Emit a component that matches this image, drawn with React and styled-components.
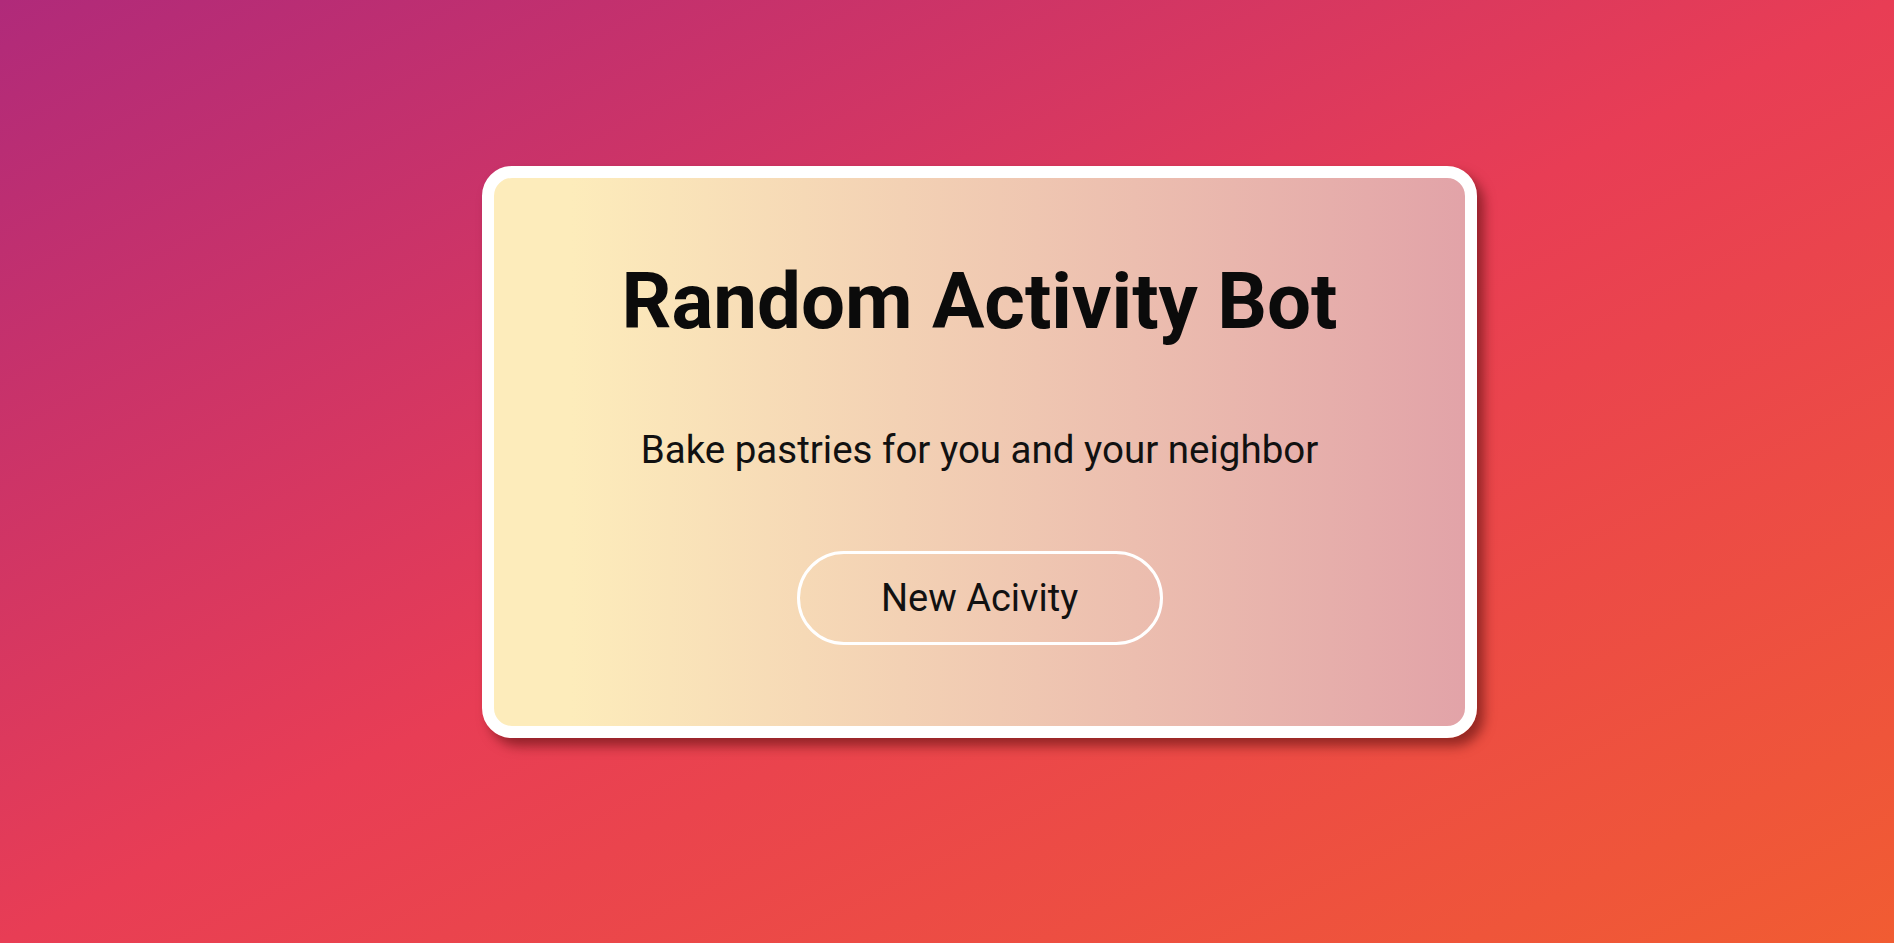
import React from "react"
import styled, { createGlobalStyle } from "styled-components"

const GlobalStyle = createGlobalStyle`
  html, body {
    margin: 0;
    padding: 0;
  }
  body {
    font-family: Roboto, "Liberation Sans", sans-serif;
  }
`

const Page = styled.div`
  min-height: 943px;
  box-sizing: border-box;
  padding: 166px 0 0 482px;
  background: linear-gradient(to bottom right, #b02a7a 0%, #e83d55 50%, #f15c32 100%);
`

const Card = styled.div`
  width: 995px;
  height: 572px;
  box-sizing: border-box;
  border: 12px solid #fff;
  border-radius: 30px;
  background: linear-gradient(to right, #fdecbb 8%, #e2a3a8 100%);
  box-shadow: 7px 8px 12px rgba(90, 15, 15, 0.6);
  display: flex;
  flex-direction: column;
  align-items: center;
  justify-content: space-evenly;
`

const Title = styled.h1`
  margin: 0;
  font-size: 78px;
  line-height: 94px;
  font-weight: 700;
  color: #0b0b0b;
`

const Activity = styled.p`
  margin: 0;
  font-size: 38.5px;
  line-height: 48px;
  color: #111;
`

const Button = styled.button`
  width: 366px;
  height: 94px;
  margin-bottom: 4px;
  border: 3px solid #fff;
  border-radius: 47px;
  background: transparent;
  font-family: Roboto, "Liberation Sans", sans-serif;
  font-size: 38px;
  color: #111;
  cursor: pointer;
`

export default function App() {
  return (
    <>
      <GlobalStyle />
      <Page>
        <Card>
          <Title>Random Activity Bot</Title>
          <Activity>Bake pastries for you and your neighbor</Activity>
          <Button>New Acivity</Button>
        </Card>
      </Page>
    </>
  )
}
